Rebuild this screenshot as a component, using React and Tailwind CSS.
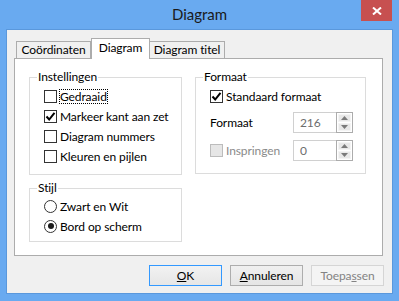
import React from "react";

const Check = ({ checked, disabled }) => (
  <span
    className={`w-[13px] h-[13px] border shrink-0 flex items-center justify-center ${
      disabled ? "border-[#bcbcbc] bg-[#e6e6e6]" : "border-[#333333] bg-white"
    }`}
  >
    {checked && (
      <svg width="11" height="11" viewBox="0 0 11 11">
        <path d="M1.5 5.5 L4.2 8.5 L9.5 1.8" stroke="#000" strokeWidth="2" fill="none" />
      </svg>
    )}
  </span>
);

const Radio = ({ on }) => (
  <span className="w-[13px] h-[13px] rounded-full border border-[#333333] bg-white shrink-0 flex items-center justify-center">
    {on && <span className="w-[6px] h-[6px] rounded-full bg-[#1a1a1a]" />}
  </span>
);

const Label = ({ children, focus, disabled }) => (
  <span
    className={`ml-[2px] border leading-[13px] whitespace-nowrap ${
      focus ? "border-dotted border-black" : "border-transparent"
    } ${disabled ? "text-[#8a8a8a]" : "text-black"}`}
  >
    {children}
  </span>
);

const Row = ({ children }) => (
  <div className="h-[20px] flex items-center pl-[14px]">{children}</div>
);

const Group = ({ title, className, children }) => (
  <div className={`border border-[#dcdcdc] flex flex-col ${className}`}>
    <span className="block w-fit -mt-[9px] ml-[7px] px-[1px] bg-white leading-[16px]">{title}</span>
    {children}
  </div>
);

const Spin = ({ value }) => (
  <div className="flex h-[21px]">
    <div className="w-[43px] h-full border border-r-0 border-[#d0d0d0] bg-white flex items-center pl-[6px] text-[#6d6d6d]">
      {value}
    </div>
    <div className="w-[17px] h-full border border-[#acacac] bg-white flex flex-col p-px gap-px">
      <div className="flex-1 bg-[#e8e8e8] border border-[#f4f4f4] flex items-center justify-center">
        <svg width="7" height="4" viewBox="0 0 7 4"><path d="M0 4 L3.5 0 L7 4 Z" fill="#7a7a7a" /></svg>
      </div>
      <div className="flex-1 bg-[#e8e8e8] border border-[#f4f4f4] flex items-center justify-center">
        <svg width="7" height="4" viewBox="0 0 7 4"><path d="M0 0 L3.5 4 L7 0 Z" fill="#7a7a7a" /></svg>
      </div>
    </div>
  </div>
);

const Button = ({ children, variant }) => {
  const cls =
    variant === "default"
      ? "border-[#3399ff] bg-linear-to-b from-[#f2f2f2] to-[#e6e6e6] text-black"
      : variant === "disabled"
      ? "border-[#d5d5d5] bg-[#f4f4f4] text-[#838383]"
      : "border-[#adadad] bg-linear-to-b from-[#f0f0f0] to-[#e5e5e5] text-black";
  return (
    <button className={`w-[73px] h-[21px] border flex items-center justify-center leading-none ${cls}`}>
      {children}
    </button>
  );
};

export default function App() {
  return (
    <div className="w-[399px] h-[301px] bg-[#69aaf0] flex flex-col font-['Lato',sans-serif] text-[12px] tracking-[-0.1px] text-black overflow-hidden">
      {/* Title bar */}
      <div className="h-[29px] relative flex items-center justify-center shrink-0">
        <span className="text-[15px] tracking-normal text-[#1a1a1a] leading-none">Diagram</span>
        <div className="absolute right-[7px] top-0 w-[31px] h-[21px] bg-[#c75050] flex items-center justify-center">
          <svg width="10" height="8" viewBox="0 0 10 8">
            <path d="M1 0.5 L9 7.5 M9 0.5 L1 7.5" stroke="#fff" strokeWidth="2" />
          </svg>
        </div>
      </div>

      {/* Client */}
      <div className="mx-[6px] border border-[#5a98dc] bg-[#f0f0f0] h-[265px] flex flex-col">
        {/* Tabs */}
        <div className="mt-[8px] ml-[7px] h-[20px] flex items-end">
          <div className="ml-[2px] w-[75px] h-[17px] border border-b-0 border-[#acacac] bg-[#f0f0f0] flex items-center justify-center">
            Coördinaten
          </div>
          <div className="w-[59px] h-[21px] -mb-px relative z-10 border border-b-0 border-[#acacac] bg-white flex items-center justify-center pb-[2px]">
            Diagram
          </div>
          <div className="w-[75px] h-[17px] border border-l-0 border-b-0 border-[#acacac] bg-[#f0f0f0] flex items-center justify-center">
            Diagram titel
          </div>
        </div>

        {/* Panel */}
        <div className="ml-[7px] mr-[9px] h-[198px] border border-[#acacac] bg-white flex gap-[13px] pl-[14px] pt-[18px]">
          <div className="w-[153px] flex flex-col gap-[13px]">
            <Group title="Instellingen" className="h-[98px]">
              <div className="pt-px flex flex-col">
                <Row>
                  <Check />
                  <Label focus>Gedraaid</Label>
                </Row>
                <Row>
                  <Check checked />
                  <Label>Markeer kant aan zet</Label>
                </Row>
                <Row>
                  <Check />
                  <Label>Diagram nummers</Label>
                </Row>
                <Row>
                  <Check />
                  <Label>Kleuren en pijlen</Label>
                </Row>
              </div>
            </Group>
            <Group title="Stijl" className="h-[54px]">
              <Row>
                <Radio />
                <Label>Zwart en Wit</Label>
              </Row>
              <Row>
                <Radio on />
                <Label>Bord op scherm</Label>
              </Row>
            </Group>
          </div>

          <Group title="Formaat" className="w-[171px] h-[97px]">
            <div className="pt-px">
              <Row>
                <Check checked />
                <Label>Standaard formaat</Label>
              </Row>
            </div>
            <div className="mt-[6px] h-[21px] flex items-center pl-[14px]">
              <span className="w-[83px]">Formaat</span>
              <Spin value="216" />
            </div>
            <div className="mt-[7px] h-[21px] flex items-center pl-[14px]">
              <div className="w-[83px] flex items-center">
                <Check disabled />
                <Label disabled>Inspringen</Label>
              </div>
              <Spin value="0" />
            </div>
          </Group>
        </div>

        {/* Buttons */}
        <div className="mt-[9px] mr-[8px] flex justify-end gap-[8px]">
          <Button variant="default">
            <span><span className="underline">O</span>K</span>
          </Button>
          <Button>
            <span><span className="underline">A</span>nnuleren</span>
          </Button>
          <Button variant="disabled">
            <span>Toepa<span className="underline">s</span>sen</span>
          </Button>
        </div>
      </div>
    </div>
  );
}
